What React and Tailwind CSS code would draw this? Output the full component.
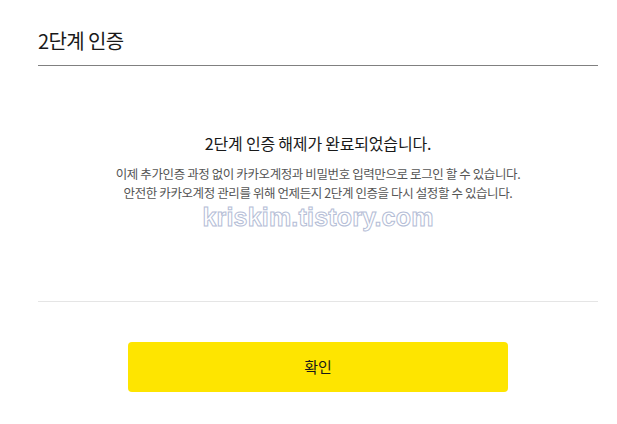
import React from 'react';

export default function App() {
  return (
    <div className="w-[617px] h-[424px] bg-white text-[#191919] font-['Noto_Sans_CJK_KR',sans-serif] pl-[38px] pr-[19px] pt-[26px] overflow-hidden">
      {/* Header */}
      <h2 className="text-[20px] leading-[30px] tracking-[-0.6px] pb-[9px] border-b border-[#808080]">2단계 인증</h2>

      {/* Body */}
      <div className="h-[236px] border-b border-[#e5e5e5] flex flex-col items-center pt-[65px]">
        <p className="text-[16px] leading-[24px] tracking-[-0.2px]">2단계 인증 해제가 완료되었습니다.</p>
        <p className="mt-[9px] text-[12.5px] leading-[19px] text-[#555] text-center tracking-[-0.4px]">
          이제 추가인증 과정 없이 카카오계정과 비밀번호 입력만으로 로그인 할 수 있습니다.<br />
          안전한 카카오계정 관리를 위해 언제든지 2단계 인증을 다시 설정할 수 있습니다.
        </p>
        <div className="-mt-[1px] font-['Liberation_Sans',sans-serif] font-bold text-[25px] leading-[32px] tracking-[0.2px] text-transparent [-webkit-text-stroke:1px_#b4bdd6]">
          kriskim.tistory.com
        </div>
      </div>

      {/* Button */}
      <div className="flex justify-center pt-[40px]">
        <button className="w-[380px] h-[50px] bg-[#fee500] rounded-[4px] text-[15px] text-[#191919]">확인</button>
      </div>
    </div>
  );
}
